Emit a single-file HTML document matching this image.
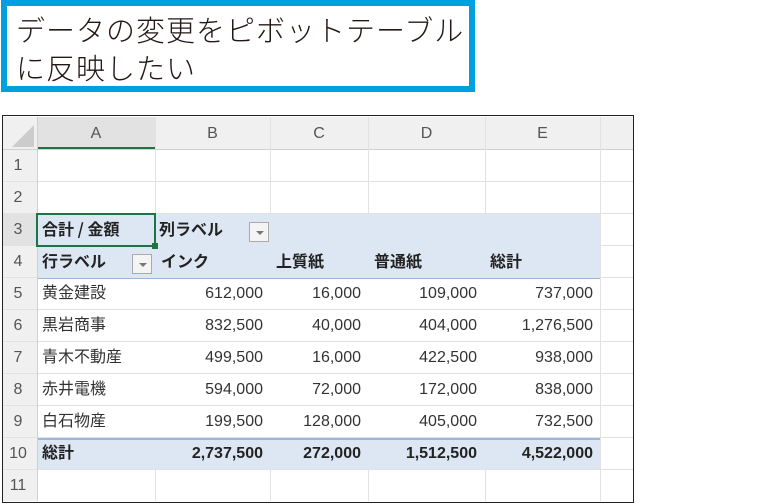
<!DOCTYPE html>
<html><head><meta charset="utf-8"><style>
body{margin:0;width:783px;height:504px;background:#fff;position:relative;overflow:hidden;font-family:"Liberation Sans","Noto Sans CJK JP",sans-serif}
.title{position:absolute;left:1px;top:0;width:453px;border:6px solid #00a0e0;font-family:"Noto Sans CJK JP",sans-serif;font-weight:300;font-size:29px;line-height:38px;color:#231815;padding:4px 0 0 9px;box-sizing:content-box;letter-spacing:1px;white-space:nowrap;height:76px}
.t{position:absolute;white-space:nowrap;font-size:16px;line-height:20px;height:20px;color:#333}
.j{font-family:"Noto Sans CJK JP",sans-serif;font-size:16px;line-height:20px;margin-top:-3px}
.frame{position:absolute;left:2px;top:115px;width:630px;height:386px;border:1.5px solid #222}
.hl{position:absolute;height:1px;background:#e2e2e2}
.vl{position:absolute;width:1px;background:#e2e2e2}
.b{font-weight:bold;color:#222}
.dd{position:absolute;width:20px;height:20px;border:1px solid #aaa;background:#f4f4f4;box-sizing:border-box}
.dd:after{content:"";position:absolute;left:6px;top:8px;border-left:4px solid transparent;border-right:4px solid transparent;border-top:4px solid #777}
</style></head><body>
<div class="title">データの変更をピボットテーブル<br>に反映したい</div>
<div class="frame"></div>
<div style="position:absolute;left:3px;top:117px;width:630px;height:32px;background:#f0f0f0"></div>
<div style="position:absolute;left:3px;top:117px;width:34px;height:384px;background:#f0f0f0"></div>
<div style="position:absolute;left:37px;top:117px;width:118px;height:32px;background:#e2e2e2;border-bottom:2px solid #217346;box-sizing:border-box"></div>
<div style="position:absolute;left:3px;top:214px;width:34px;height:32px;background:#e2e2e2"></div>
<svg style="position:absolute;left:12px;top:125px" width="22" height="22"><polygon points="22,0 22,22 0,22" fill="#ccc"/></svg>
<div style="position:absolute;left:37px;top:214px;width:563px;height:64px;background:#dde7f3;border-bottom:1px solid #9bb7dd"></div>
<div style="position:absolute;left:37px;top:438px;width:563px;height:32px;background:#dde7f3;border-top:2px solid #9bb7dd;box-sizing:border-box"></div>
<div class="hl" style="left:3px;top:149px;width:630px;background:#d0d0d0"></div>
<div class="hl" style="left:3px;top:181px;width:630px"></div>
<div class="hl" style="left:3px;top:213px;width:630px"></div>
<div class="hl" style="left:600px;top:245px;width:33px"></div>
<div class="hl" style="left:600px;top:277px;width:33px"></div>
<div class="hl" style="left:3px;top:309px;width:630px"></div>
<div class="hl" style="left:3px;top:341px;width:630px"></div>
<div class="hl" style="left:3px;top:373px;width:630px"></div>
<div class="hl" style="left:3px;top:405px;width:630px"></div>
<div class="hl" style="left:3px;top:437px;width:630px"></div>
<div class="hl" style="left:3px;top:469px;width:630px"></div>
<div class="hl" style="left:3px;top:245px;width:34px"></div>
<div class="hl" style="left:3px;top:277px;width:34px"></div>
<div class="vl" style="left:37px;top:117px;height:384px;background:#d0d0d0"></div>
<div class="vl" style="left:155px;top:117px;height:97px"></div>
<div class="vl" style="left:270px;top:117px;height:97px"></div>
<div class="vl" style="left:368px;top:117px;height:97px"></div>
<div class="vl" style="left:485px;top:117px;height:97px"></div>
<div class="vl" style="left:600px;top:117px;height:384px"></div>
<div class="vl" style="left:155px;top:470px;height:31px"></div>
<div class="vl" style="left:270px;top:470px;height:31px"></div>
<div class="vl" style="left:368px;top:470px;height:31px"></div>
<div class="vl" style="left:485px;top:470px;height:31px"></div>
<div style="position:absolute;left:36px;top:213px;width:120px;height:34px;border:2px solid #217346;box-sizing:border-box"></div>
<div style="position:absolute;left:152px;top:243px;width:6px;height:6px;background:#217346"></div>
<div class="t" style="left:37px;top:124px;width:118px;text-align:center;color:#555">A</div>
<div class="t" style="left:155px;top:124px;width:115px;text-align:center;color:#555">B</div>
<div class="t" style="left:270px;top:124px;width:98px;text-align:center;color:#555">C</div>
<div class="t" style="left:368px;top:124px;width:117px;text-align:center;color:#555">D</div>
<div class="t" style="left:485px;top:124px;width:115px;text-align:center;color:#555">E</div>
<div class="t" style="left:3px;top:156px;width:30px;text-align:center;color:#555">1</div>
<div class="t" style="left:3px;top:188px;width:30px;text-align:center;color:#555">2</div>
<div class="t" style="left:3px;top:220px;width:30px;text-align:center;color:#555">3</div>
<div class="t" style="left:3px;top:252px;width:30px;text-align:center;color:#555">4</div>
<div class="t" style="left:3px;top:284px;width:30px;text-align:center;color:#555">5</div>
<div class="t" style="left:3px;top:316px;width:30px;text-align:center;color:#555">6</div>
<div class="t" style="left:3px;top:348px;width:30px;text-align:center;color:#555">7</div>
<div class="t" style="left:3px;top:380px;width:30px;text-align:center;color:#555">8</div>
<div class="t" style="left:3px;top:412px;width:30px;text-align:center;color:#555">9</div>
<div class="t" style="left:3px;top:444px;width:30px;text-align:center;color:#555">10</div>
<div class="t" style="left:3px;top:476px;width:30px;text-align:center;color:#555">11</div>
<div class="t b j" style="left:42px;top:221px">合計 / 金額</div>
<div class="t b j" style="left:159px;top:221px">列ラベル</div>
<div class="dd" style="left:249px;top:222px"></div>
<div class="t b j" style="left:42px;top:253px">行ラベル</div>
<div class="dd" style="left:132px;top:254px"></div>
<div class="t b j" style="left:161px;top:253px">インク</div>
<div class="t b j" style="left:276px;top:253px">上質紙</div>
<div class="t b j" style="left:374px;top:253px">普通紙</div>
<div class="t b j" style="left:490px;top:253px">総計</div>
<div style="position:absolute;left:0;top:284px">
<div class="t j" style="left:42px;top:0">黄金建設</div><div class="t" style="left:155px;top:0;width:108px;text-align:right">612,000</div><div class="t" style="left:270px;top:0;width:91px;text-align:right">16,000</div><div class="t" style="left:368px;top:0;width:109px;text-align:right">109,000</div><div class="t" style="left:485px;top:0;width:108px;text-align:right">737,000</div>
<div class="t j" style="left:42px;top:32px">黒岩商事</div><div class="t" style="left:155px;top:32px;width:108px;text-align:right">832,500</div><div class="t" style="left:270px;top:32px;width:91px;text-align:right">40,000</div><div class="t" style="left:368px;top:32px;width:109px;text-align:right">404,000</div><div class="t" style="left:485px;top:32px;width:108px;text-align:right">1,276,500</div>
<div class="t j" style="left:42px;top:64px">青木不動産</div><div class="t" style="left:155px;top:64px;width:108px;text-align:right">499,500</div><div class="t" style="left:270px;top:64px;width:91px;text-align:right">16,000</div><div class="t" style="left:368px;top:64px;width:109px;text-align:right">422,500</div><div class="t" style="left:485px;top:64px;width:108px;text-align:right">938,000</div>
<div class="t j" style="left:42px;top:96px">赤井電機</div><div class="t" style="left:155px;top:96px;width:108px;text-align:right">594,000</div><div class="t" style="left:270px;top:96px;width:91px;text-align:right">72,000</div><div class="t" style="left:368px;top:96px;width:109px;text-align:right">172,000</div><div class="t" style="left:485px;top:96px;width:108px;text-align:right">838,000</div>
<div class="t j" style="left:42px;top:128px">白石物産</div><div class="t" style="left:155px;top:128px;width:108px;text-align:right">199,500</div><div class="t" style="left:270px;top:128px;width:91px;text-align:right">128,000</div><div class="t" style="left:368px;top:128px;width:109px;text-align:right">405,000</div><div class="t" style="left:485px;top:128px;width:108px;text-align:right">732,500</div>
<div class="t b j" style="left:42px;top:160px">総計</div><div class="t b" style="left:155px;top:160px;width:108px;text-align:right">2,737,500</div><div class="t b" style="left:270px;top:160px;width:91px;text-align:right">272,000</div><div class="t b" style="left:368px;top:160px;width:109px;text-align:right">1,512,500</div><div class="t b" style="left:485px;top:160px;width:108px;text-align:right">4,522,000</div>
</div>
</body></html>
